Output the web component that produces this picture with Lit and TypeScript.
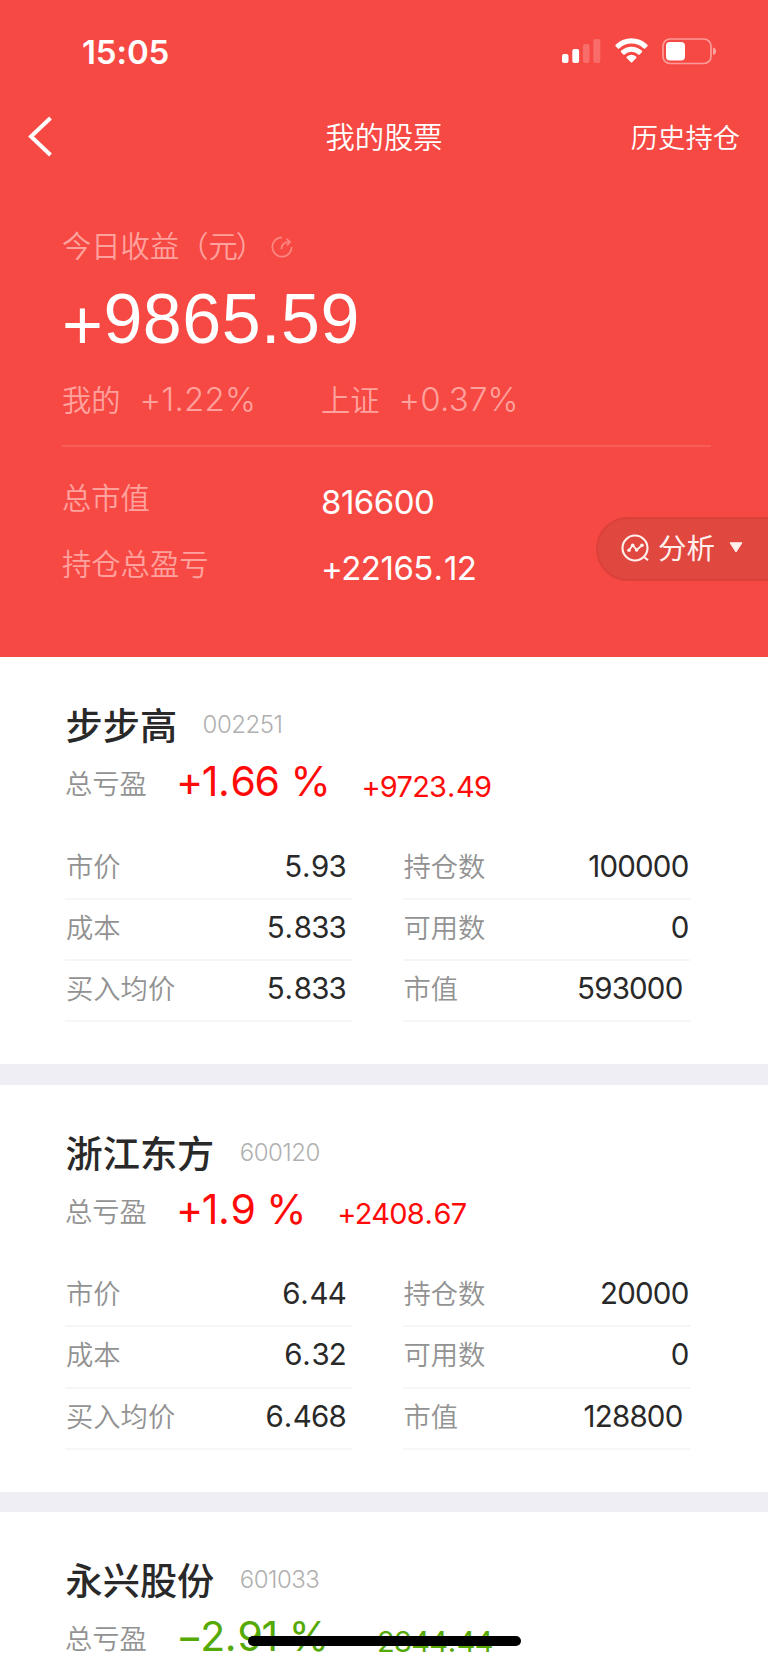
import { LitElement, html, css, svg, nothing } from "lit";
import { customElement, property } from "lit/decorators.js";

interface Holding {
  name: string;
  code: string;
  percent: string;
  profit: string;
  cells: [string, string][];
}

const holdings: Holding[] = [
  {
    name: "步步高", code: "002251", percent: "+1.66 %", profit: "+9723.49",
    cells: [["市价", "5.93"], ["持仓数", "100000"], ["成本", "5.833"], ["可用数", "0"], ["买入均价", "5.833"], ["市值", "593000"]],
  },
  {
    name: "浙江东方", code: "600120", percent: "+1.9 %", profit: "+2408.67",
    cells: [["市价", "6.44"], ["持仓数", "20000"], ["成本", "6.32"], ["可用数", "0"], ["买入均价", "6.468"], ["市值", "128800"]],
  },
  { name: "永兴股份", code: "601033", percent: "−2.91 %", profit: "−2844.44", cells: [] },
];

/* Gives the decimal point a little more room on both sides. */
const decimal = (value: string) => {
  const [whole, fraction] = value.split(".");
  return fraction === undefined ? whole : html`${whole}<span class="dot">.</span>${fraction}`;
};

@customElement("status-bar")
class StatusBar extends LitElement {
  static styles = css`
    :host { display: flex; height: 102px; align-items: center; justify-content: space-between; padding: 0 51px 0 82px; color: #fff; }
    .time { font: 600 33px/40px Inter, "Liberation Sans", sans-serif; letter-spacing: -0.1px; margin-top: 1px; }
    svg { display: block; }
  `;
  render() {
    return html`<span class="time">15:05</span>
      <svg width="156" height="28" viewBox="0 0 156 28" fill="#fff">
        <rect x="1" y="17" width="6.5" height="9" rx="2" />
        <rect x="11.3" y="12" width="6.8" height="14" rx="2" />
        <rect x="22" y="7" width="6.5" height="19" rx="2" opacity=".2" />
        <rect x="32.3" y="2" width="7" height="24" rx="2" opacity=".2" />
        <g transform="translate(70.500 0) scale(.95 1) translate(-70.500 0)">
        <path d="M54 9.6Q52.900 8.500 54.100 7.500A24.500 24.500 0 0 1 86.900 7.500Q88.100 8.500 87 9.600L84.900 11.500Q84.200 12.100 83.400 11.400A19.300 19.300 0 0 0 57.600 11.400Q56.800 12.100 56.100 11.500Z" />
        <path d="M59.600 15.300Q58.700 14.400 59.800 13.600A16.500 16.500 0 0 1 81.200 13.600Q82.300 14.400 81.400 15.300L79.100 17.400Q78.400 18 77.700 17.400A11.200 11.200 0 0 0 63.300 17.400Q62.600 18 61.900 17.400Z" />
        <path d="M65.500 20.900Q64.700 20.100 65.700 19.400A8.500 8.500 0 0 1 75.300 19.400Q76.300 20.100 75.500 20.900L71.300 25.200Q70.500 26 69.700 25.200Z" />
        </g>
        <rect x="102" y="2" width="48" height="24.500" rx="7" fill="none" stroke="#fff" stroke-width="1.700" opacity=".45" />
        <rect x="105" y="5" width="19" height="18.500" rx="4" />
        <path d="M152 10.500Q155 11.300 155 14.200T152 18Z" opacity=".5" />
      </svg>`;
  }
}

@customElement("holding-card")
class HoldingCard extends LitElement {
  @property({ attribute: false }) data!: Holding;
  static styles = css`
    :host { display: block; height: 427.5px; background: linear-gradient(#fff 407px, #efeef4 407px); color: #292929; font-family: "Noto Sans CJK SC", sans-serif; }
    .card { padding: 41px 79px 0 65px; }
    .title { display: flex; height: 55px; align-items: center; }
    .name { font-size: 37.2px; line-height: 48px; font-weight: 500; margin: -3px 0 0 0.5px; }
    .code { font: 300 24px/30px Inter, sans-serif; color: #b0b0b0; margin: -1px 0 0 25.5px; letter-spacing: -0.5px; }
    .total { display: flex; height: 60px; align-items: center; color: #ff0a08; white-space: nowrap; }
    .total.down { color: #55a905; }
    .label { color: #929292; font-weight: 350; font-size: 27.3px; line-height: 40px; margin-top: -2px; }
    .percent { font: 400 41px/48px Inter, sans-serif; margin: -4px 0 0 29px; letter-spacing: -1.3px; word-spacing: 1.5px; font-feature-settings: "calt" 0; }
    .profit { font: 400 29px/36px Inter, sans-serif; margin: 7px 0 0 32px; letter-spacing: -0.75px; font-feature-settings: "calt" 0; }
    .dot { padding: 0 0.05em 0 0.02em; }
    .grid { display: grid; grid-template-columns: 287px 287px; column-gap: 51px; grid-auto-rows: 61.33px; margin-top: 25.5px; }
    .cell { display: flex; box-sizing: border-box; justify-content: space-between; align-items: center; border-bottom: 2px solid #f6f6f6; padding: 0 6px 5px 1px; }
    .cell:nth-child(even) { padding-left: 0.5px; padding-right: 1.5px; }
    .cell:nth-child(6) { padding-right: 7.5px; }
    .value { font: 400 29.5px/36px Inter, sans-serif; letter-spacing: -0.8px; }
  `;
  render() {
    const d = this.data;
    return html`<div class="card">
      <div class="title"><span class="name">${d.name}</span><span class="code">${d.code}</span></div>
      <div class="total ${d.percent.startsWith("+") ? "" : "down"}">
        <span class="label">总亏盈</span><span class="percent">${decimal(d.percent)}</span><span class="profit">${decimal(d.profit)}</span>
      </div>
      ${d.cells.length
        ? html`<div class="grid">${d.cells.map(([k, v]) => html`<div class="cell"><span class="label">${k}</span><span class="value">${decimal(v)}</span></div>`)}</div>`
        : nothing}
    </div>`;
  }
}

@customElement("app-root")
class AppRoot extends LitElement {
  static styles = css`
    :host { display: block; position: relative; width: 768px; height: 1663px; overflow: hidden; background: #fff; font-family: "Noto Sans CJK SC", sans-serif; }
    .hero { height: 657px; background: #f74944; color: #fff; font-weight: 350; }
    .nav { display: grid; grid-template-columns: 1fr auto 1fr; align-items: center; height: 68px; padding: 0 28px 0 27px; }
    .nav svg { display: block; }
    .nav .title { font-size: 29.3px; line-height: 44px; margin: -2px 0 0 1px; }
    .nav .history { justify-self: end; font-size: 27.3px; line-height: 44px; margin-top: -1px; }
    .summary { padding: 50px 57px 0 62px; }
    .today { display: flex; align-items: center; height: 50px; color: #ffa29e; font-size: 29.3px; line-height: 44px; }
    .today .caption { margin-top: -3px; }
    .today .unit { letter-spacing: -2px; }
    .today svg { margin: 4px 0 0 5px; }
    .amount { font: 400 70px/80px "Liberation Sans", sans-serif; height: 93px; padding-top: 9px; box-sizing: border-box; letter-spacing: 0.5px; white-space: nowrap; }
    .plus { display: inline-block; line-height: 60px; margin-bottom: -6px; vertical-align: -6px; }
    .compare, .line { display: grid; grid-template-columns: 259px 1fr; align-items: center; font-size: 29.3px; }
    .compare { height: 84px; padding-bottom: 11px; border-bottom: 2px solid #f95d58; box-sizing: border-box; color: #ffa29e; }
    .pair { display: flex; align-items: center; }
    .pair span { line-height: 44px; margin-top: -1px; }
    .num { font: 300 33px/44px Inter, sans-serif; font-feature-settings: "calt" 0; }
    .pair .num { margin: 0 0 0 19px; letter-spacing: 0.2px; }
    .lines { padding-top: 21px; }
    .line { height: 66px; }
    .line .key { color: #ffa29e; line-height: 44px; margin-top: -10px; }
    .line .num { margin-top: 2px; font-weight: 400; letter-spacing: -0.5px; }
    .line .dot { padding: 0 0.04em 0 0.02em; }
    .analysis { position: absolute; right: -2px; top: 517px; width: 174px; height: 64px; box-sizing: border-box; border: 2px solid #db403b; border-radius: 32px 0 0 32px; background: #e0473f; color: #fff0ee; display: flex; align-items: center; padding-left: 22px; font-size: 28.500px; line-height: 40px; }
    .analysis span { margin: -5px 0 0 8px; font-weight: 400; }
    .analysis .icon { margin-top: -3px; }
    .analysis .caret { margin: -3px 0 0 14px; }
    .home { position: absolute; left: 248px; top: 1636px; width: 273px; height: 10px; border-radius: 5px; background: #000; }
  `;
  render() {
    return html`
      <div class="hero">
        <status-bar></status-bar>
        <div class="nav">
          <svg width="26" height="42" viewBox="0 0 26 42" fill="none" stroke="#fff" stroke-width="4"><path d="M23.500 3L4 21.500L23.500 40" /></svg>
          <span class="title">我的股票</span>
          <span class="history">历史持仓</span>
        </div>
        <div class="summary">
          <div class="today">
            <span class="caption">今日收益（<span class="unit">元</span>）</span>
            <svg width="24" height="24" viewBox="0 0 24 24" fill="none" stroke="#fb8783" stroke-width="1.700">
              <path d="M12 2.300A9.700 9.700 0 1 0 21.700 12M11.500 14C11.500 9.500 14 7 19 7" /><path d="M16.500 3.800L20 7L17 10.200" />
            </svg>
          </div>
          <div class="amount"><span class="plus">+</span>9865.59</div>
          <div class="compare">
            <div class="pair"><span>我的</span><span class="num">+1.22%</span></div>
            <div class="pair"><span>上证</span><span class="num">+0.37%</span></div>
          </div>
          <div class="lines">
            <div class="line"><span class="key">总市值</span><span class="num">${decimal("816600")}</span></div>
            <div class="line"><span class="key">持仓总盈亏</span><span class="num">${decimal("+22165.12")}</span></div>
          </div>
        </div>
      </div>
      ${holdings.map((h) => html`<holding-card .data=${h}></holding-card>`)}
      <div class="analysis">
        <svg class="icon" width="30" height="30" viewBox="0 0 30 30" fill="none" stroke="currentColor" stroke-width="2.100">
          <circle cx="15" cy="15" r="12.500" /><path d="M23.500 23.500L28 27.300" />
          <path d="M9 17.300L12.700 12.300L16.600 17L22 12.300" stroke-width="1.800" />
          ${[[9, 17.3], [12.7, 12.3], [16.6, 17], [22, 12.3]].map(([x, y]) => svg`<circle cx=${x} cy=${y} r="1.800" fill="currentColor" stroke="none" />`)}
        </svg>
        <span>分析</span>
        <svg class="caret" width="14" height="11" viewBox="0 0 14 11"><path d="M1 .8H13L7 10Z" fill="currentColor" stroke="currentColor" stroke-linejoin="round" /></svg>
      </div>
      <div class="home"></div>`;
  }
}
